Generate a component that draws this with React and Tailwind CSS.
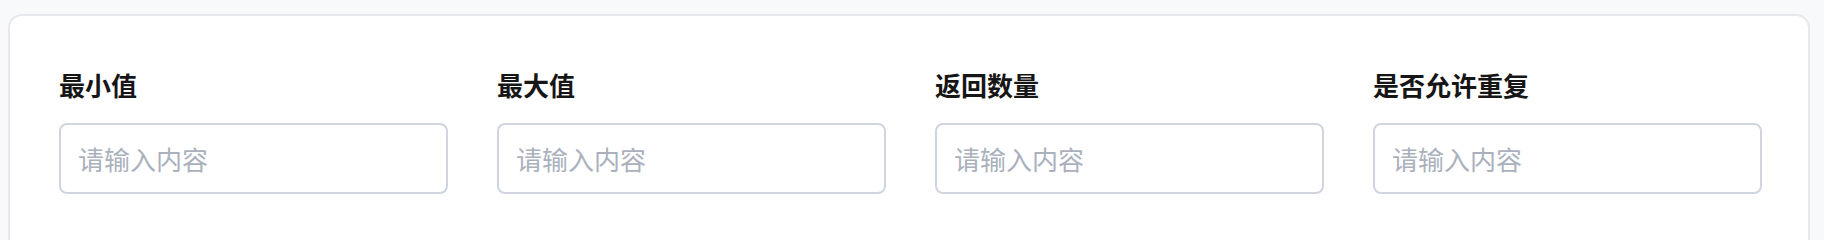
const fields = ["最小值", "最大值", "返回数量", "是否允许重复"];

export default function App() {
  return (
    <div className="h-[240px] overflow-hidden bg-[#f8f9fb] pl-2 pr-[14px] pt-[14px] font-['Noto_Sans_CJK_SC','Noto_Sans',sans-serif]">
      <div className="h-[300px] rounded-[14px] border-2 border-[#e6e8ee] bg-white pl-[49px] pr-[46px] pt-[51px]">
        <div className="grid grid-cols-4 gap-x-[49px]">
          {fields.map((label) => (
            <div key={label} className="flex flex-col">
              <label className="text-[26px] font-semibold leading-[36px] text-[#161616]">{label}</label>
              <input
                type="text"
                placeholder="请输入内容"
                className="mt-[20px] h-[71px] w-full rounded-[8px] border-2 border-[#cfd5e0] bg-white px-[17px] text-[26px] text-[#333] outline-none placeholder:text-[#aab1bd]"
              />
            </div>
          ))}
        </div>
      </div>
    </div>
  );
}
